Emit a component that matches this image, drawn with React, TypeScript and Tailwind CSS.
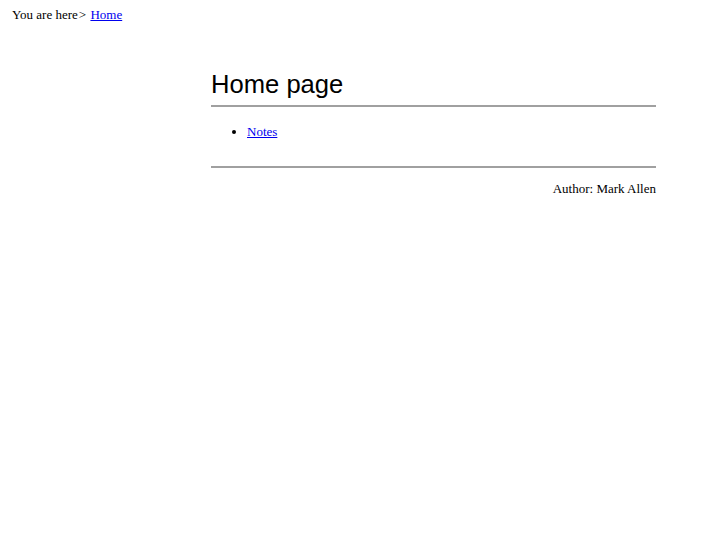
export default function App() {
  return (
    <div className="min-h-[545px] bg-white text-black" style={{ fontFamily: '"Liberation Serif", serif' }}>
      <div className="pl-[12px] pt-[7px] pb-[1px] text-[13px] leading-[16px]">
        You are here<span className="ml-[1px]">&gt;</span> <a href="#" className="ml-[1px] text-[#0000ee] underline">Home</a>
      </div>
      <div className="ml-[211px] w-[445px] mt-[45px]">
        <h1 className="text-[25.6px] leading-[30px] pb-[6px] border-b-2 border-[#a0a0a0]" style={{ fontFamily: '"Liberation Sans", sans-serif' }}>
          Home page
        </h1>
        <ul className="pl-[36px] pt-[17px] pb-[26px] text-[13px] leading-[16px] list-disc border-b-2 border-[#a0a0a0]">
          <li><a href="#" className="text-[#0000ee] underline">Notes</a></li>
        </ul>
        <div className="text-right text-[13px] leading-[16px] pt-[13px]">Author: Mark Allen</div>
      </div>
    </div>
  );
}
